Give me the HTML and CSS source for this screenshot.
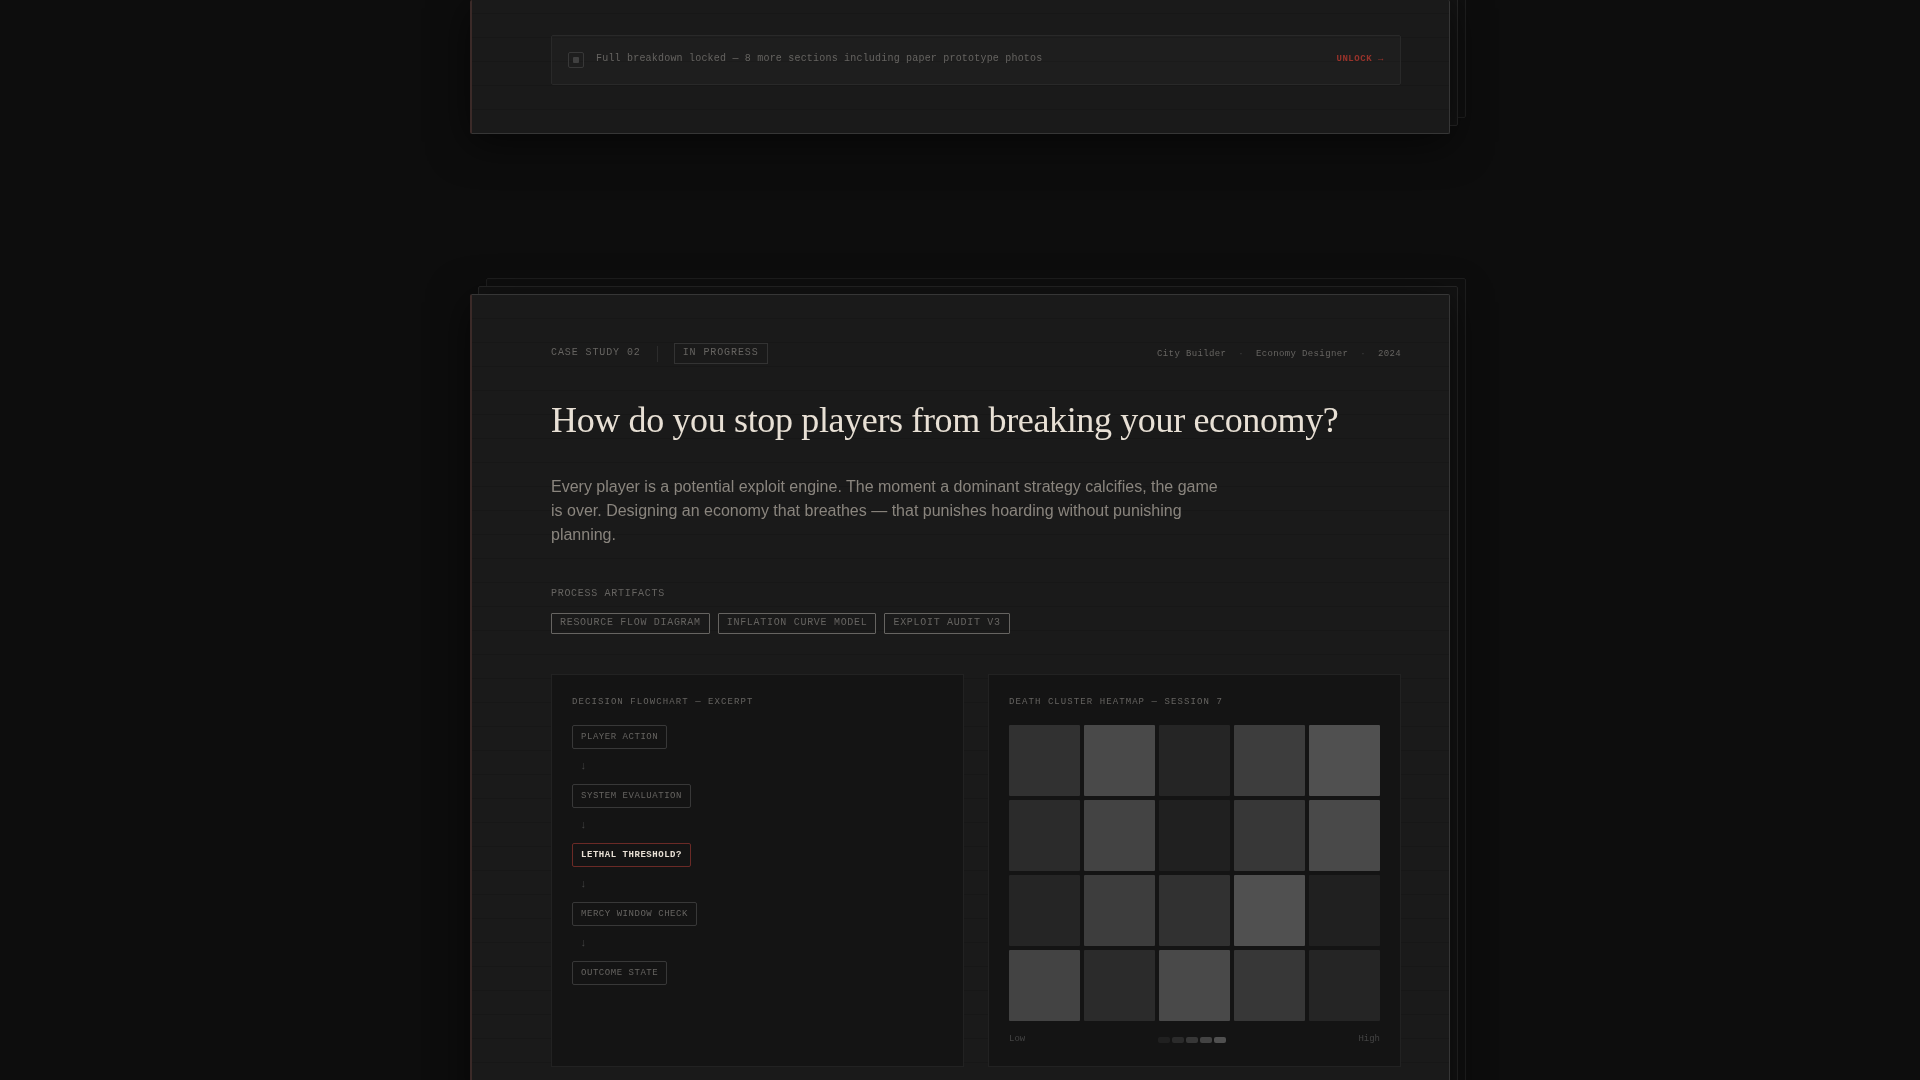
FILE: index.html
```html
<!DOCTYPE html>
<html lang="en">
<head>
    <meta charset="UTF-8">
    <meta name="viewport" content="width=device-width, initial-scale=1.0">
    <title>Case Studies</title>
    <link rel="stylesheet" href="styles.css">
</head>
<body>
    <main class="stack">
        <!-- Case study 01 -->
        <article class="card card-continued">
            <div class="locked">
                <span class="lock-icon"></span>
                <p class="locked-text">Full breakdown locked — 8 more sections including paper prototype photos</p>
                <a class="unlock" href="#unlock">UNLOCK →</a>
            </div>
        </article>

        <!-- Case study 02 -->
        <article class="card">
            <header class="card-header">
                <div class="card-id">
                    <span class="case-number">CASE STUDY 02</span>
                    <span class="divider"></span>
                    <span class="status">IN PROGRESS</span>
                </div>
                <div class="card-meta">
                    <span>City Builder</span>
                    <span class="dot">·</span>
                    <span>Economy Designer</span>
                    <span class="dot">·</span>
                    <span>2024</span>
                </div>
            </header>

            <h2 class="card-title">How do you stop players from breaking your economy?</h2>
            <p class="card-summary">Every player is a potential exploit engine. The moment a dominant strategy calcifies, the game is over. Designing an economy that breathes — that punishes hoarding without punishing planning.</p>

            <section class="artifacts">
                <h3 class="artifacts-label">PROCESS ARTIFACTS</h3>
                <ul class="tags">
                    <li class="tag">RESOURCE FLOW DIAGRAM</li>
                    <li class="tag">INFLATION CURVE MODEL</li>
                    <li class="tag">EXPLOIT AUDIT V3</li>
                </ul>
            </section>

            <div class="panels">
                <section class="panel">
                    <h3 class="panel-label">DECISION FLOWCHART — EXCERPT</h3>
                    <div class="flow">
                        <div class="node">PLAYER ACTION</div>
                        <div class="arrow">↓</div>
                        <div class="node">SYSTEM EVALUATION</div>
                        <div class="arrow">↓</div>
                        <div class="node node-active">LETHAL THRESHOLD?</div>
                        <div class="arrow">↓</div>
                        <div class="node">MERCY WINDOW CHECK</div>
                        <div class="arrow">↓</div>
                        <div class="node">OUTCOME STATE</div>
                    </div>
                </section>

                <section class="panel">
                    <h3 class="panel-label">DEATH CLUSTER HEATMAP — SESSION 7</h3>
                    <div class="heatmap">
                        <i class="heat-4"></i><i class="heat-8"></i><i class="heat-2"></i><i class="heat-6"></i><i class="heat-9"></i>
                        <i class="heat-3"></i><i class="heat-7"></i><i class="heat-1"></i><i class="heat-5"></i><i class="heat-8"></i>
                        <i class="heat-2"></i><i class="heat-6"></i><i class="heat-4"></i><i class="heat-9"></i><i class="heat-1"></i>
                        <i class="heat-7"></i><i class="heat-3"></i><i class="heat-8"></i><i class="heat-5"></i><i class="heat-2"></i>
                    </div>
                    <div class="legend">
                        <span>Low</span>
                        <div class="swatches">
                            <i class="heat-1"></i><i class="heat-3"></i><i class="heat-5"></i><i class="heat-7"></i><i class="heat-9"></i>
                        </div>
                        <span>High</span>
                    </div>
                </section>
            </div>
        </article>
    </main>
</body>
</html>
```
FILE: styles.css
```css
* {
    margin: 0;
    padding: 0;
    box-sizing: border-box;
}

body {
    height: 100vh;
    overflow: hidden;
    background-color: #0d0d0d;
    color: #e8e0d5;
    font-family: "Liberation Mono", "Courier New", monospace;
    font-size: 10px;
    line-height: 14px;
}

h3 {
    font-size: inherit;
    font-weight: normal;
}

.stack {
    max-width: 980px;
    margin: 0 auto;
    display: flex;
    flex-direction: column;
    gap: 160px;
}

/* Cards: ruled paper with two sheets behind */
.card {
    position: relative;
    z-index: 0;
    padding: 48px 48px 48px 79px;
    border: 1px solid #363636;
    border-left: 2px solid #3b2a28;
    border-radius: 2px;
    background: repeating-linear-gradient(#1a1a1a 0 23px, #171717 23px 24px);
    background-origin: padding-box;
    transform-style: preserve-3d;
    box-shadow: 0 8px 40px rgba(0, 0, 0, 0.6);
}

.card::before,
.card::after {
    content: "";
    position: absolute;
    border: 1px solid #262626;
    border-radius: 2px;
    background-color: #131313;
}

.card::before {
    inset: -9px -9px 7px 6px;
    transform: translateZ(-1px);
}

.card::after {
    inset: -17px -17px 15px 14px;
    border-color: #1e1e1e;
    background-color: #0f0f0f;
    transform: translateZ(-2px);
}

.card-continued {
    padding-top: 35px;
    border-top: 0;
    background-position: 0 -10px;
}

/* Locked row */
.locked {
    display: flex;
    align-items: flex-start;
    gap: 12px;
    padding: 16px;
    border: 1px solid #292929;
    border-radius: 2px;
    background-color: rgba(255, 255, 255, 0.02);
}

.lock-icon {
    width: 16px;
    height: 16px;
    display: flex;
    align-items: center;
    justify-content: center;
    border: 1px solid #383838;
    border-radius: 2px;
}

.lock-icon::before {
    content: "";
    width: 6px;
    height: 6px;
    border-radius: 1px;
    background-color: #404040;
}

.locked-text {
    flex: 1;
    color: #666461;
    letter-spacing: 0.02em;
}

.unlock {
    color: #98332b;
    font-size: 9px;
    font-weight: bold;
    letter-spacing: 0.06em;
    text-decoration: none;
}

/* Header */
.card-header {
    display: flex;
    justify-content: space-between;
    align-items: center;
    margin-bottom: 32px;
}

.card-id {
    display: flex;
    align-items: center;
    gap: 16px;
    color: #666461;
    letter-spacing: 0.09em;
}

.case-number {
    padding-bottom: 2px;
}

.divider {
    width: 1px;
    height: 16px;
    background-color: #2c2c2c;
}

.status {
    padding: 2px 8px 3px;
    border: 1px solid #333333;
}

.card-meta {
    display: flex;
    gap: 12px;
    color: #666461;
    font-size: 9px;
    letter-spacing: 0.04em;
}

.dot {
    color: #404040;
}

.card-title {
    margin-bottom: 31px;
    font-family: "Liberation Serif", "Times New Roman", serif;
    font-size: 36px;
    font-weight: normal;
    line-height: 48px;
    letter-spacing: -0.01em;
}

.card-summary {
    max-width: 680px;
    margin-bottom: 40px;
    color: #8a857e;
    font-family: "Liberation Sans", Arial, sans-serif;
    font-size: 16px;
    line-height: 24px;
}

/* Artifacts */
.artifacts {
    margin-bottom: 40px;
    color: #666461;
    letter-spacing: 0.07em;
}

.artifacts-label {
    margin-bottom: 12px;
}

.tags {
    display: flex;
    flex-wrap: wrap;
    gap: 8px;
    list-style: none;
}

.tag {
    padding: 2px 8px 3px;
    border: 1px solid #666461;
    border-radius: 1px;
}

/* Panels */
.panels {
    display: grid;
    grid-template-columns: 1fr 1fr;
    gap: 24px;
}

.panel {
    padding: 20px;
    border: 1px solid #222222;
    background-color: #141414;
}

.panel-label {
    margin-bottom: 16px;
    color: #666461;
    font-size: 9px;
    letter-spacing: 0.12em;
}

.flow {
    display: flex;
    flex-direction: column;
    align-items: flex-start;
    font-size: 9px;
    letter-spacing: 0.06em;
}

.node {
    padding: 4px 8px;
    border: 1px solid #383838;
    border-radius: 2px;
    color: #666461;
}

.node-active {
    border-color: #6b2a26;
    color: #e8e0d5;
    font-weight: bold;
}

.arrow {
    padding: 0 8px;
    color: #444444;
    font-size: 11px;
    line-height: 35px;
}

/* Heatmap */
.heatmap {
    display: grid;
    grid-template-columns: repeat(5, 1fr);
    gap: 4px;
    margin-bottom: 12px;
}

.heatmap i {
    aspect-ratio: 1;
    border-radius: 1px;
}

.legend {
    display: flex;
    justify-content: space-between;
    align-items: center;
    color: #444444;
    font-size: 9px;
    line-height: 13px;
}

.swatches {
    display: flex;
    gap: 2px;
}

.swatches i {
    width: 12px;
    height: 6px;
    border-radius: 2px;
}

.heat-1 { background-color: #202020; }
.heat-2 { background-color: #252525; }
.heat-3 { background-color: #2b2b2b; }
.heat-4 { background-color: #313131; }
.heat-5 { background-color: #373737; }
.heat-6 { background-color: #3d3d3d; }
.heat-7 { background-color: #434343; }
.heat-8 { background-color: #494949; }
.heat-9 { background-color: #505050; }
```
